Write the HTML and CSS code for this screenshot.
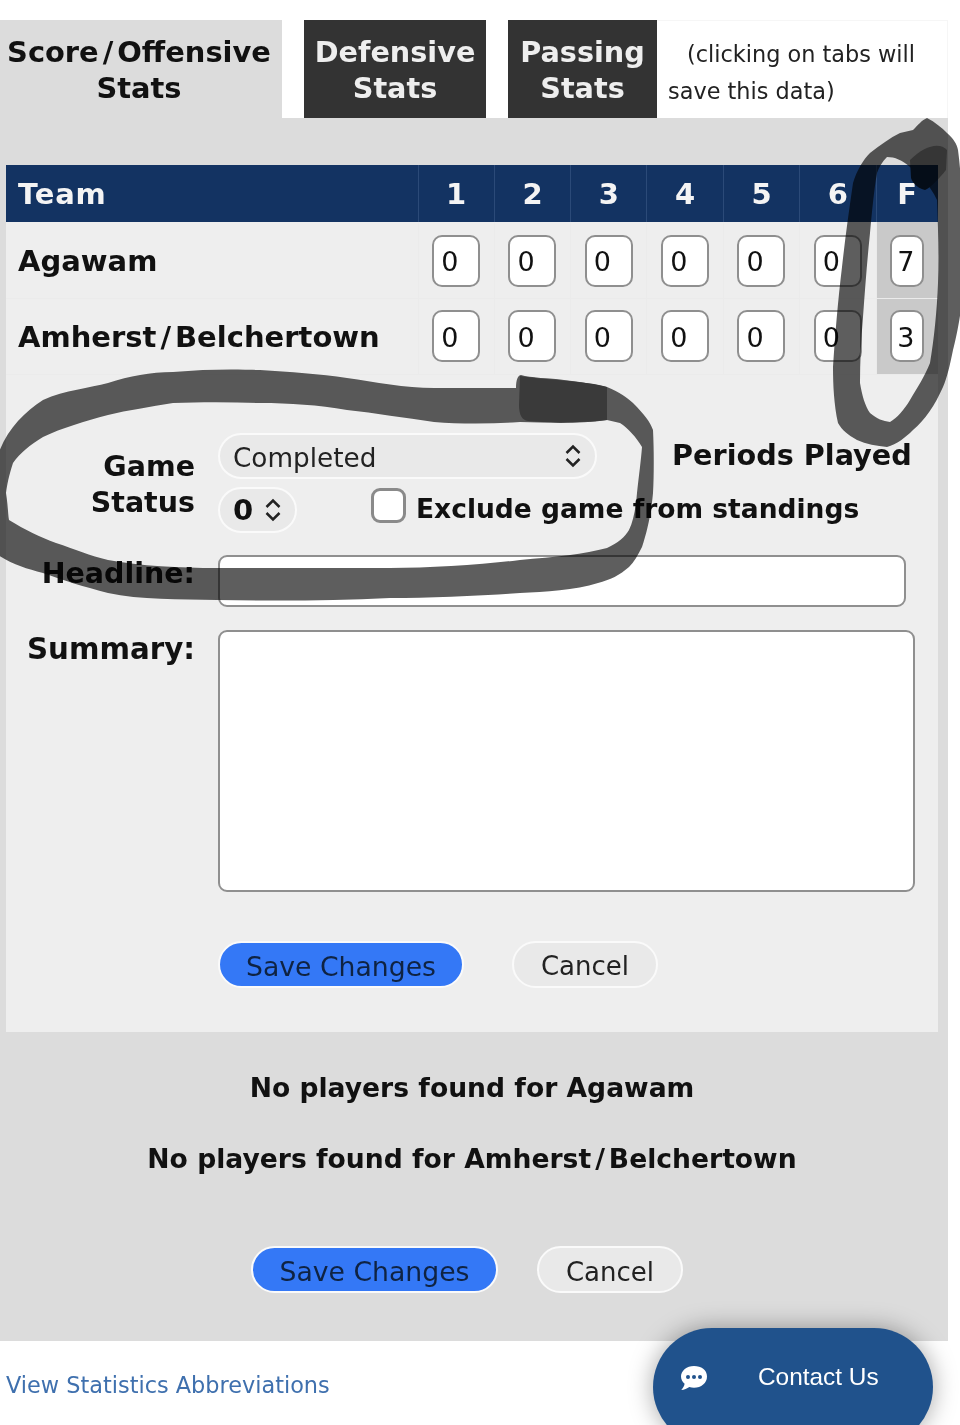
FILE: index.html
```html
<!DOCTYPE html>
<html lang="en">
<head>
    <meta charset="UTF-8">
    <meta name="viewport" content="width=device-width, initial-scale=1.0">
    <title>Edit Game Stats</title>
    <link rel="stylesheet" href="styles.css">
</head>
<body>
    <div class="page">
        <div class="tabs">
            <div class="tab tab-active">Score<span class="slash">/</span>Offensive<br>Stats</div>
            <div class="tab tab-defense">Defensive Stats</div>
            <div class="tab tab-passing">Passing Stats</div>
            <div class="tab-note"><span class="note-first">(clicking on tabs will</span> save this data)</div>
        </div>

        <div class="content">
            <div class="panel">
                <table class="score-table">
                    <thead>
                        <tr>
                            <th class="team">Team</th>
                            <th>1</th>
                            <th>2</th>
                            <th>3</th>
                            <th>4</th>
                            <th>5</th>
                            <th>6</th>
                            <th class="final-head">F</th>
                        </tr>
                    </thead>
                    <tbody>
                        <tr>
                            <td class="team">Agawam</td>
                            <td><input class="score" value="0"></td>
                            <td><input class="score" value="0"></td>
                            <td><input class="score" value="0"></td>
                            <td><input class="score" value="0"></td>
                            <td><input class="score" value="0"></td>
                            <td><input class="score" value="0"></td>
                            <td class="final"><input class="score" value="7"></td>
                        </tr>
                        <tr>
                            <td class="team">Amherst<span class="slash">/</span>Belchertown</td>
                            <td><input class="score" value="0"></td>
                            <td><input class="score" value="0"></td>
                            <td><input class="score" value="0"></td>
                            <td><input class="score" value="0"></td>
                            <td><input class="score" value="0"></td>
                            <td><input class="score" value="0"></td>
                            <td class="final"><input class="score" value="3"></td>
                        </tr>
                    </tbody>
                </table>

                <div class="field field-status">
                    <label class="field-label status-label">Game Status</label>
                    <div class="status-controls">
                        <div class="status-row">
                            <div class="pill-select pill-wide">
                                <span class="pill-text">Completed</span>
                                <svg class="updown" viewBox="0 0 18 24"><path d="M2.5 9 9 2.500 15.500 9M2.500 15 9 21.500 15.500 15"/></svg>
                            </div>
                            <span class="periods">Periods Played</span>
                        </div>
                        <div class="status-row status-row-2">
                            <div class="pill-select pill-small">
                                <span>0</span>
                                <svg class="updown" viewBox="0 0 18 24"><path d="M2.5 9 9 2.500 15.500 9M2.500 15 9 21.500 15.500 15"/></svg>
                            </div>
                            <span class="fake-check"></span>
                            <span class="exclude">Exclude game from standings</span>
                        </div>
                    </div>
                </div>

                <div class="field field-headline">
                    <label class="field-label">Headline:</label>
                    <input class="headline-input">
                </div>

                <div class="field field-summary">
                    <label class="field-label">Summary:</label>
                    <textarea class="summary-input"></textarea>
                </div>

                <div class="form-buttons">
                    <button class="btn btn-save">Save Changes</button>
                    <button class="btn btn-cancel">Cancel</button>
                </div>
            </div>

            <p class="no-players first">No players found for Agawam</p>
            <p class="no-players">No players found for Amherst<span class="slash">/</span>Belchertown</p>

            <div class="bottom-buttons">
                <button class="btn btn-save">Save Changes</button>
                <button class="btn btn-cancel">Cancel</button>
            </div>
        </div>

        <div class="footer">
            <a class="abbr-link" href="#">View Statistics Abbreviations</a>
        </div>

        <!-- marker scribbles drawn over the screenshot -->
        <svg class="ink" viewBox="0 0 960 1425">
            <path class="ink-stroke" fill-rule="evenodd" d="M-6 470C0 437 20 415 43 400C65 390 90 388 108 383C130 376 150 372 173 372C205 369 235 369 260 370C290 372 320 374 347 378C375 382 405 388 434 388L516 388C516 380 518 375 521 375C530 378 550 378 564 380C580 382 595 384 607 387C620 392 627 398 633 403C645 415 650 422 653 430C654 450 654 475 653 493C651 515 647 532 642 547C638 555 634 562 629 567C620 575 610 580 598 583C575 590 545 592 520 593C480 596 430 598 390 598C330 601 270 601 217 600C180 599 140 600 108 593C85 587 62 580 43 573C25 568 10 564 -6 552ZM6 493C8 505 8 515 9 520C25 530 40 537 56 543C75 549 90 556 108 560C140 566 180 568 217 568L390 568C430 568 480 565 520 560C555 557 585 554 607 548C618 543 625 537 629 530C634 520 636 505 637 493C639 475 641 460 642 447C636 437 628 428 620 423L607 420C580 424 550 423 520 422C490 424 460 424 434 422C405 418 375 413 347 410C318 405 290 403 260 403C230 402 200 402 173 403C150 407 128 410 108 415C85 421 62 428 43 437C30 445 20 453 13 463C9 475 7 485 6 493Z"/>
            <path class="ink-dark" d="M520 376C535 379 590 381 607 387L607 420C585 423 545 423 528 421C522 420 519 415 519 405Z"/>
            <path class="ink-stroke" fill-rule="evenodd" d="M927 118C935 122 942 128 947 133C953 138 957 144 958 150C962 180 962 210 962 233L962 300C960 320 956 338 953 350C950 365 947 378 943 387C935 405 925 420 913 430C905 438 897 444 887 447C877 446 866 444 857 440C848 435 842 430 838 423C834 405 833 385 833 367C835 335 838 300 842 267C845 240 849 210 853 183C857 170 863 160 870 153C880 145 890 138 900 133L913 130C918 125 922 120 927 118ZM887 157C882 162 879 167 877 173C874 190 872 212 870 233C867 262 865 290 863 317C861 340 860 362 860 383C862 395 865 406 870 413C877 419 883 421 890 422C897 418 904 410 910 400C917 388 925 376 930 363C934 340 937 310 938 283C939 255 938 225 937 200C930 185 920 175 910 167C902 160 895 157 887 157Z"/>
            <path class="ink-dark" d="M910 160C925 145 940 142 947 150L946 170C938 180 930 188 925 190C918 188 913 184 911 178Z"/>
        </svg>

        <div class="contact">
            <svg class="contact-icon" viewBox="0 0 28 26"><path d="M14 1C6.800 1 1 5.700 1 11.500c0 2.900 1.400 5.400 3.600 7.300-.3 2.400-1.700 4.500-3.300 6.200 2.900-.1 5.900-1.300 8-2.900 1.500.4 3.100.7 4.700.7 7.200 0 13-4.700 13-11.300S21.200 1 14 1z"/><circle class="dot" cx="8" cy="12" r="2"/><circle class="dot" cx="14" cy="12" r="2"/><circle class="dot" cx="20" cy="12" r="2"/></svg>
            <span>Contact Us</span>
        </div>
    </div>
</body>
</html>
```

FILE: styles.css
```css
html, body {
    margin: 0;
    height: 1425px;
    overflow: hidden;
    background: white;
}
body {
    font-family: "DejaVu Sans", sans-serif;
    color: #111;
}
.page {
    position: relative;
    height: 1425px;
    padding-top: 20px;
    box-sizing: border-box;
    overflow: hidden;
    background: white;
}
.slash {
    margin: 0 4px;
}

/* tabs */
.tabs {
    display: flex;
    width: 948px;
    height: 98px;
}
.tab {
    box-sizing: border-box;
    text-align: center;
    font-size: 28.7px;
    font-weight: bold;
    line-height: 36px;
    padding-top: 14px;
}
.tab-active {
    width: 282px;
    padding-right: 4px;
    font-size: 28.9px;
    background: #dcdcdc;
}
.tab-defense {
    width: 182px;
    margin-left: 22px;
    background: #333;
    color: #eee;
}
.tab-passing {
    width: 149px;
    margin-left: 22px;
    background: #333;
    color: #eee;
}
.tab-note {
    flex: 1;
    box-sizing: border-box;
    padding: 15px 0 0 11px;
    font-size: 22.4px;
    line-height: 37px;
    color: #222;
    border: 1px solid #f6f6f6;
    border-bottom: none;
    border-left: none;
}
.note-first {
    padding-left: 19px;
}

/* grey area */
.content {
    width: 948px;
    height: 1223px;
    box-sizing: border-box;
    padding: 47px 10px 0 6px;
    background: #dcdcdc;
}
.panel {
    height: 867px;
    background: #eee;
}

/* score table */
.score-table {
    width: 932px;
    table-layout: fixed;
    border-collapse: collapse;
}
.score-table th {
    height: 57px;
    padding: 1px 0 0;
    box-sizing: border-box;
    background: #133362;
    color: #f4f4f4;
    font-size: 29px;
    border-left: 1px solid #2b4a78;
}
.score-table th.team {
    width: 412px;
    text-align: left;
    padding-left: 12px;
    letter-spacing: 0.8px;
    border-left: none;
}
.score-table th.final-head {
    width: 62px;
}
.score-table td {
    height: 76px;
    box-sizing: border-box;
    padding: 0;
    text-align: center;
    border-left: 1px solid #ebebeb;
    border-bottom: 1px solid #ebebeb;
}
.score-table td.team {
    padding: 2px 0 0 12px;
    text-align: left;
    font-size: 29px;
    font-weight: bold;
    border-left: none;
}
tbody tr:first-child td.team {
    padding-top: 3px;
}
.score-table td.final {
    background: #c9c9c9;
}
.score {
    width: 48px;
    height: 52px;
    box-sizing: border-box;
    padding: 2px 0 0 7px;
    font-family: "DejaVu Sans", sans-serif;
    font-size: 27px;
    color: #111;
    background: white;
    border: 2px solid #8f8f8f;
    border-radius: 10px;
    vertical-align: middle;
}
tbody tr:first-child .score {
    margin-top: 2px;
}
.final .score {
    width: 34px;
    padding-left: 5px;
}

/* form */
.field {
    display: grid;
    grid-template-columns: 189px 1fr;
    column-gap: 23px;
}
.field-label {
    text-align: right;
    font-size: 28.5px;
    font-weight: bold;
    line-height: 36px;
}
.field-status {
    margin-top: 58px;
}
.status-label {
    padding-top: 16px;
}
.status-row {
    display: flex;
    align-items: center;
    height: 46px;
}
.status-row-2 {
    margin-top: 8px;
}
.pill-select {
    display: flex;
    align-items: center;
    justify-content: space-between;
    height: 46px;
    box-sizing: border-box;
    background: #e9e9e9;
    border: 2px solid #fafafa;
    border-radius: 23px;
    font-size: 26.3px;
    color: #222;
}
.pill-wide {
    width: 379px;
    padding: 0 13px;
}
.pill-text {
    margin-top: 4px;
}
.pill-small {
    width: 79px;
    padding: 0 13px;
    font-size: 29px;
    font-weight: bold;
    color: #111;
}
.updown {
    width: 18px;
    height: 24px;
    fill: none;
    stroke: #222;
    stroke-width: 2.5;
}
.periods {
    margin: -2px 0 0 75px;
    font-size: 28.7px;
    font-weight: bold;
}
.fake-check {
    width: 35px;
    height: 35px;
    box-sizing: border-box;
    margin: -8px 0 0 74px;
    background: white;
    border: 3px solid #8a8a8a;
    border-radius: 9px;
}
.exclude {
    margin: -2px 0 0 10px;
    font-size: 26.5px;
    font-weight: bold;
}
.field-headline {
    margin-top: 22px;
}
.field-headline .field-label {
    padding-top: 1px;
}
.headline-input {
    width: 688px;
    height: 52px;
    box-sizing: border-box;
    background: white;
    border: 2px solid #8f8f8f;
    border-radius: 9px;
}
.field-summary {
    margin-top: 23px;
}
.field-summary .field-label {
    padding-top: 1px;
    font-size: 29.3px;
}
.summary-input {
    display: block;
    width: 697px;
    height: 262px;
    box-sizing: border-box;
    background: white;
    border: 2px solid #8f8f8f;
    border-radius: 9px;
    resize: none;
}

/* buttons */
.btn {
    height: 47px;
    box-sizing: border-box;
    padding: 4px 0 0;
    font-family: "DejaVu Sans", sans-serif;
    font-size: 26px;
    border: 2px solid #fafafa;
    border-radius: 24px;
}
.btn-save {
    width: 246px;
    font-size: 26.7px;
    background: #3478f6;
    color: #0f2342;
}
.btn-cancel {
    width: 146px;
    background: #e9e9e9;
    color: #222;
}
.form-buttons {
    display: flex;
    gap: 48px;
    margin: 49px 0 0 212px;
}
.no-players {
    margin: 0;
    width: 932px;
    text-align: center;
    font-size: 26.6px;
    font-weight: bold;
    line-height: 36px;
}
.no-players.first {
    margin-top: 38px;
    margin-bottom: 35px;
}
.bottom-buttons {
    display: flex;
    gap: 39px;
    margin: 69px 0 0 245px;
}
.bottom-buttons .btn-save {
    width: 247px;
}

/* footer */
.footer {
    padding: 31px 0 0 6px;
}
.abbr-link {
    font-size: 22.4px;
    color: #3f70ae;
    text-decoration: none;
}
.contact {
    position: absolute;
    left: 653px;
    top: 1328px;
    width: 280px;
    height: 118px;
    box-sizing: border-box;
    display: flex;
    align-items: flex-start;
    padding: 35px 0 0 27px;
    background: #20528c;
    border-radius: 59px;
    box-shadow: 0 0 24px rgba(0,0,0,0.35);
    color: white;
    font-family: "Liberation Sans", Arial, sans-serif;
    font-size: 24.4px;
    line-height: 28px;
}
.contact-icon {
    width: 28px;
    height: 26px;
    margin-top: 2px;
    fill: white;
}
.contact-icon .dot {
    fill: #20528c;
}
.contact span {
    margin-left: 50px;
}

/* marker scribbles */
.ink {
    position: absolute;
    left: 0;
    top: 0;
    width: 960px;
    height: 1425px;
    pointer-events: none;
    mix-blend-mode: multiply;
    filter: blur(0.7px);
}
.ink-stroke {
    fill: #5e5e5e;
}
.ink-dark {
    fill: #3e3e3e;
}
```
